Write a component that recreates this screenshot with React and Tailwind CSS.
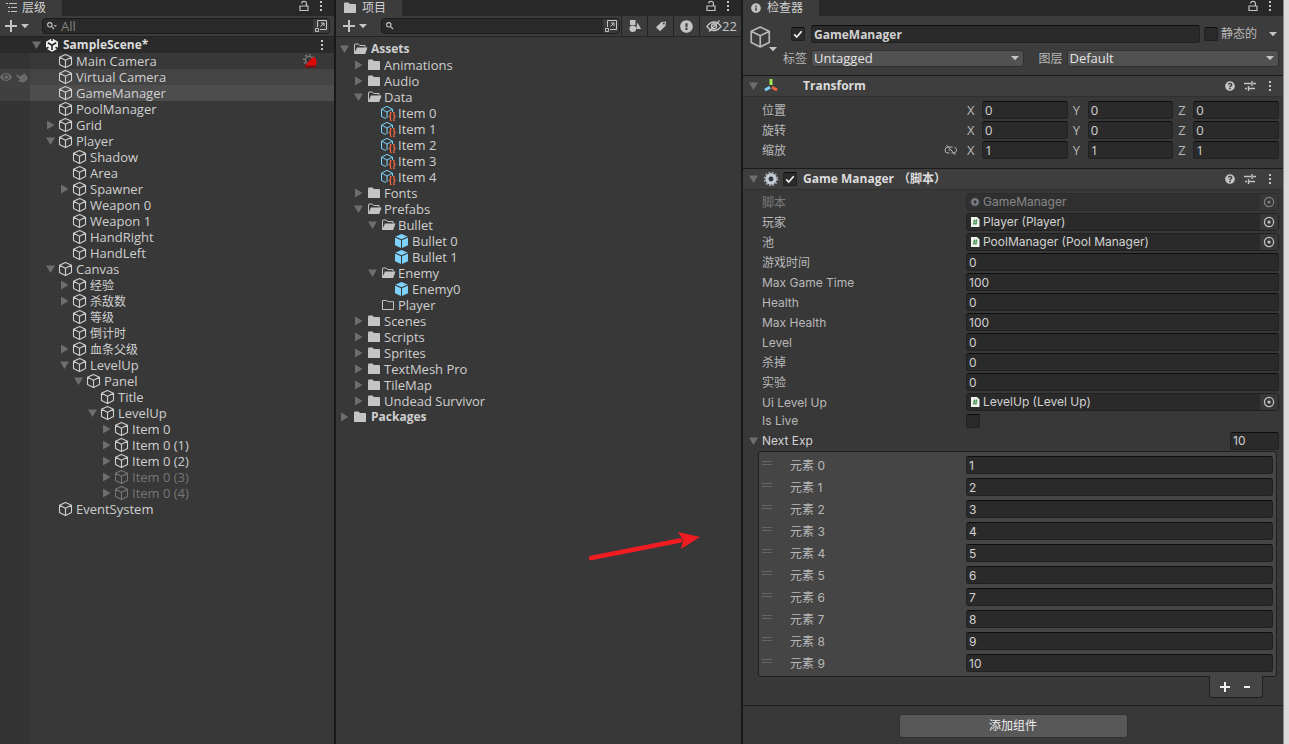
import { FaInfoCircle, FaQuestionCircle, FaExclamationCircle, FaEye, FaHandPointer } from "react-icons/fa";

const hierarchy = [
  { name: "Main Camera", depth: 1, icon: "cube", brain: true },
  { name: "Virtual Camera", depth: 1, icon: "cube", state: "hover" },
  { name: "GameManager", depth: 1, icon: "cube", state: "selected" },
  { name: "PoolManager", depth: 1, icon: "cube" },
  { name: "Grid", depth: 1, icon: "cube", arrow: "closed" },
  { name: "Player", depth: 1, icon: "cube", arrow: "open" },
  { name: "Shadow", depth: 2, icon: "cube" },
  { name: "Area", depth: 2, icon: "cube" },
  { name: "Spawner", depth: 2, icon: "cube", arrow: "closed" },
  { name: "Weapon 0", depth: 2, icon: "cube" },
  { name: "Weapon 1", depth: 2, icon: "cube" },
  { name: "HandRight", depth: 2, icon: "cube" },
  { name: "HandLeft", depth: 2, icon: "cube" },
  { name: "Canvas", depth: 1, icon: "cube", arrow: "open" },
  { name: "经验", depth: 2, icon: "cube", arrow: "closed", small: true },
  { name: "杀敌数", depth: 2, icon: "cube", arrow: "closed", small: true },
  { name: "等级", depth: 2, icon: "cube", small: true },
  { name: "倒计时", depth: 2, icon: "cube", small: true },
  { name: "血条父级", depth: 2, icon: "cube", arrow: "closed", small: true },
  { name: "LevelUp", depth: 2, icon: "cube", arrow: "open" },
  { name: "Panel", depth: 3, icon: "cube", arrow: "open" },
  { name: "Title", depth: 4, icon: "cube" },
  { name: "LevelUp", depth: 4, icon: "cube", arrow: "open" },
  { name: "Item 0", depth: 5, icon: "cube", arrow: "closed" },
  { name: "Item 0 (1)", depth: 5, icon: "cube", arrow: "closed" },
  { name: "Item 0 (2)", depth: 5, icon: "cube", arrow: "closed" },
  { name: "Item 0 (3)", depth: 5, icon: "cube", arrow: "closed", inactive: true },
  { name: "Item 0 (4)", depth: 5, icon: "cube", arrow: "closed", inactive: true },
  { name: "EventSystem", depth: 1, icon: "cube" },
];

const project = [
  { name: "Assets", depth: 0, icon: "open", arrow: "open", bold: true },
  { name: "Animations", depth: 1, icon: "folder", arrow: "closed" },
  { name: "Audio", depth: 1, icon: "folder", arrow: "closed" },
  { name: "Data", depth: 1, icon: "open", arrow: "open" },
  { name: "Item 0", depth: 2, icon: "asset" },
  { name: "Item 1", depth: 2, icon: "asset" },
  { name: "Item 2", depth: 2, icon: "asset" },
  { name: "Item 3", depth: 2, icon: "asset" },
  { name: "Item 4", depth: 2, icon: "asset" },
  { name: "Fonts", depth: 1, icon: "folder", arrow: "closed" },
  { name: "Prefabs", depth: 1, icon: "open", arrow: "open" },
  { name: "Bullet", depth: 2, icon: "open", arrow: "open" },
  { name: "Bullet 0", depth: 3, icon: "prefab" },
  { name: "Bullet 1", depth: 3, icon: "prefab" },
  { name: "Enemy", depth: 2, icon: "open", arrow: "open" },
  { name: "Enemy0", depth: 3, icon: "prefab" },
  { name: "Player", depth: 2, icon: "empty" },
  { name: "Scenes", depth: 1, icon: "folder", arrow: "closed" },
  { name: "Scripts", depth: 1, icon: "folder", arrow: "closed" },
  { name: "Sprites", depth: 1, icon: "folder", arrow: "closed" },
  { name: "TextMesh Pro", depth: 1, icon: "folder", arrow: "closed" },
  { name: "TileMap", depth: 1, icon: "folder", arrow: "closed" },
  { name: "Undead Survivor", depth: 1, icon: "folder", arrow: "closed" },
  { name: "Packages", depth: 0, icon: "folder", arrow: "closed", bold: true },
];

const fields = [
  { label: "脚本", ref: "GameManager", disabled: true },
  { label: "玩家", ref: "Player (Player)" },
  { label: "池", ref: "PoolManager (Pool Manager)" },
  { label: "游戏时间", value: "0" },
  { label: "Max Game Time", value: "100" },
  { label: "Health", value: "0" },
  { label: "Max Health", value: "100" },
  { label: "Level", value: "0" },
  { label: "杀掉", value: "0" },
  { label: "实验", value: "0" },
  { label: "Ui Level Up", ref: "LevelUp (Level Up)" },
];

const nextExp = ["1", "2", "3", "4", "5", "6", "7", "8", "9", "10"];

const inputClass =
  "h-[18px] min-w-0 rounded-[3px] border border-[#212121] border-t-[#0d0d0d] bg-[#2a2a2a] px-[2px] text-[#d2d2d2] outline-none";

const boxClass =
  "size-[14px] shrink-0 appearance-none rounded-[2px] border border-[#212121] border-t-[#0d0d0d] bg-[#2a2a2a]";

/* ---------- icons ---------- */

function Cube({ className = "size-4" }) {
  return (
    <svg viewBox="0 0 16 16" className={className} fill="none" stroke="currentColor" strokeWidth="1.1" strokeLinejoin="round">
      <path d="M7.5 1.4 13.5 4.2v7.4L7.5 14.6 1.5 11.6V4.2ZM1.5 4.2l6 3 6-3M7.5 7.2v7.4" />
    </svg>
  );
}

function Prefab() {
  return (
    <svg viewBox="0 0 16 16" className="size-4">
      <path d="M7.5 1 13.5 3.6 7.5 6.3 1.5 3.6Z" fill="#7ed2fb" />
      <path d="M1 4.6 7 7.3V15L1 12.2Z" fill="#7ed2fb" />
      <path d="M14 4.6 8 7.3V15l6-2.8Z" fill="#7ed2fb" />
    </svg>
  );
}

function DataAsset() {
  return (
    <svg viewBox="0 0 16 16" className="size-4" fill="none">
      <path d="M6 13.6 1.5 11.5V4.2L7 1.3l5.5 2.9V7M1.5 4.2 7 7l5.5-2.8M7 7v6" stroke="#7ed2fb" />
      <path d="M11.5 7.5h-1v3l-1.2 1 1.2 1v3h1M13 7.5h1v3l1.2 1-1.2 1v3h-1" stroke="#f0663f" strokeWidth="1.2" />
    </svg>
  );
}

function Folder() {
  return (
    <svg viewBox="0 0 16 16" className="size-4">
      <path d="M2 3.5Q2 2.5 3 2.5h3.5L8 4h5q1 0 1 1v7.5q0 .5-.5.5h-11q-.5 0-.5-.5Z" fill="#c4c4c4" />
    </svg>
  );
}

function FolderOpen() {
  return (
    <svg viewBox="0 0 16 16" className="size-4">
      <path d="M2.5 12.5V3.5q0-.5.5-.5h3.2l1.4 1.5H13V6.5" fill="none" stroke="#c4c4c4" />
      <path d="M5 6.5h10.5L13.2 13H2Z" fill="#c4c4c4" />
    </svg>
  );
}

function FolderEmpty() {
  return (
    <svg viewBox="0 0 16 16" className="size-4">
      <path d="M2.5 12.5v-9h4L8 4.7h5.5v7.8Z" fill="none" stroke="#c4c4c4" />
    </svg>
  );
}

function Foldout({ state }) {
  return (
    <svg viewBox="0 0 12 12" className="size-3 shrink-0" fill="#6e6e6e">
      {state === "open" && <path d="M2 2.5h9L6.5 10Z" />}
      {state === "closed" && <path d="M3 1.5v9L10.5 6Z" />}
    </svg>
  );
}

function Caret() {
  return (
    <svg viewBox="0 0 8 8" className="size-2 shrink-0" fill="#c4c4c4">
      <path d="M0 2h8L4 6.2Z" />
    </svg>
  );
}

function Dots() {
  return (
    <svg viewBox="0 0 4 12" className="h-3 w-1" fill="#c4c4c4">
      <path d="M1 1h2v2H1zM1 5h2v2H1zM1 9h2v2H1z" />
    </svg>
  );
}

function Lock() {
  return (
    <svg viewBox="0 0 10 12" className="h-3 w-[10px]" fill="none" stroke="#c4c4c4" strokeWidth="1.2">
      <path d="M1 6h8v4.5H1ZM2.8 3.6V3q0-1.6 2.2-1.6T7.4 3v3" />
    </svg>
  );
}

function Plus() {
  return (
    <svg viewBox="0 0 12 12" className="size-3" stroke="#c4c4c4" strokeWidth="2">
      <path d="M6 0v12M0 6h12" />
    </svg>
  );
}

function Magnifier({ caret }) {
  return (
    <svg viewBox="0 0 10 8" className="h-2 w-[10px] shrink-0" fill="none" stroke="#c4c4c4" strokeWidth="1.1">
      <circle cx="2.8" cy="2.8" r="2.2" />
      <path d="M4.4 4.4 7 7" />
      {caret && <path d="M6.4 3.2h3.6L8.2 5Z" fill="#c4c4c4" stroke="none" />}
    </svg>
  );
}

function OpenSearch() {
  return (
    <svg viewBox="0 0 12 12" className="size-3" fill="none" stroke="#c4c4c4">
      <path d="M2.5 7V.5h9v9H5M.5 8.5h3v3h-3zM5.5 6.5l3.5-3.5M6 3h3v3" />
    </svg>
  );
}

function UnityLogo() {
  return (
    <svg viewBox="0 0 16 16" className="size-4">
      <path d="M8 1.3 14 4.7v6.7L8 14.8 2 11.4V4.7Z" fill="#f0f0f0" />
      <path d="M8 8.2V13M8 8.2 3.8 5.8M8 8.2l4.2-2.4" stroke="#282828" strokeWidth="1.6" />
      <path d="M8 .5V4M1.5 12l3-1.7M14.5 12l-3-1.7" stroke="#282828" strokeWidth="1.6" />
    </svg>
  );
}

function Gear({ className = "size-4" }) {
  return (
    <svg viewBox="0 0 16 16" className={className} fill="none">
      <circle cx="8" cy="8" r="6.3" stroke="#9aa2ac" strokeWidth="2" strokeDasharray="1.7 1.6" />
      <circle cx="8" cy="8" r="4" stroke="#c3cad3" strokeWidth="3.4" />
      <circle cx="8" cy="8" r="2.4" fill="#33363b" />
    </svg>
  );
}

function ScriptFile() {
  return (
    <svg viewBox="0 0 10 12" className="h-3 w-[10px]">
      <path d="M1 1h6l2.5 2.5V11H1Z" fill="#eef3ee" />
      <path d="M4.6 3.4 3.8 8.8M6.6 3.4 5.8 8.8M3.2 5h4.2M2.9 7.2h4.2" stroke="#3b8746" strokeWidth=".9" />
    </svg>
  );
}

function TransformIcon() {
  return (
    <svg viewBox="0 0 16 16" className="size-4" strokeWidth="3">
      <path d="M8 1v6" stroke="#a3e84f" />
      <path d="M7 9.2 2 12" stroke="#7ed2fb" />
      <path d="m9 9.2 5 2.8" stroke="#f0663f" />
    </svg>
  );
}

function Sliders() {
  return (
    <svg viewBox="0 0 12 12" className="size-3" fill="none" stroke="#c4c4c4" strokeWidth="1.4">
      <path d="M0 3.5h7M9 3.5h3M8 1v5M1 8.5h2M5 8.5h6M4.5 6v5" />
    </svg>
  );
}

function BrainIcon() {
  return (
    <svg viewBox="0 0 16 16" className="size-4">
      <circle cx="7" cy="7" r="3.6" fill="none" stroke="#7b7b7b" strokeWidth="1.3" />
      <circle cx="7" cy="7" r="5.2" fill="none" stroke="#7b7b7b" strokeWidth="1.6" strokeDasharray="1.6 2.4" />
      <path d="M3 12.5 11 4l1.3 1.5L14 4.3v4l1.7 1-1.7 1v2.2Z" fill="#e00808" />
      <path d="M3 12.5h10.5v2H3Z" fill="#8e0606" />
    </svg>
  );
}

function Unlinked() {
  return (
    <svg viewBox="0 0 14 12" className="h-3 w-[14px]" fill="none" stroke="#b4b4b4">
      <path d="M8.5 3H4a3 3 0 0 0 0 6h1.5M10.5 3.2a3 3 0 0 1-.5 5.8H7.5M4.5 6h2M2.5 1l9 10" />
    </svg>
  );
}

function HiddenEye() {
  return (
    <svg viewBox="0 0 16 14" className="h-[14px] w-4 shrink-0" fill="none" stroke="#c4c4c4" strokeWidth="1.4">
      <path d="M1 7.5Q4 3 8 3t7 4.5Q12 11.5 8 11.5T1 7.5Z" />
      <path d="M5.5 7.2a2.5 2.5 0 0 1 5 0 2.5 2.5 0 0 1-5 0M3 12.5 13.5 1.5" />
    </svg>
  );
}

function FilterType() {
  return (
    <svg viewBox="0 0 14 14" className="size-[14px]" fill="#c4c4c4">
      <path d="M2 1h5.5v5H2zM9.5 3.5 13 10H8Z" />
      <circle cx="4.8" cy="9.8" r="3.3" />
    </svg>
  );
}

function Tag() {
  return (
    <svg viewBox="0 0 12 12" className="size-3">
      <path d="M1 7.2 6.5 2 11 1.5 10.5 6 5 11.2Z" fill="#c4c4c4" />
      <circle cx="8.8" cy="3.6" r="1" fill="#3c3c3c" />
    </svg>
  );
}

const icons = {
  cube: <Cube />,
  prefab: <Prefab />,
  asset: <DataAsset />,
  folder: <Folder />,
  open: <FolderOpen />,
  empty: <FolderEmpty />,
};

/* ---------- shared parts ---------- */

function TabBar({ title, icon }) {
  return (
    <div className="flex h-4 justify-between bg-[#282828]">
      <div className="flex h-4 items-center gap-1 bg-[#3c3c3c] pr-4 pl-[6px] text-xs leading-4 text-[#d2d2d2]">
        {icon}
        <h2>{title}</h2>
      </div>
      <div className="flex items-center gap-[10px] pr-[11px] pb-1">
        <button aria-label="Lock"><Lock /></button>
        <button aria-label="Menu"><Dots /></button>
      </div>
    </div>
  );
}

function SearchBox({ placeholder, caret }) {
  return (
    <div className="flex h-4 min-w-0 flex-1 items-center rounded-[4px] border border-[#1c1c1c] bg-[#2a2a2a]">
      <label className="flex min-w-0 flex-1 items-center gap-1 pl-1">
        <Magnifier caret={caret} />
        <input
          type="text"
          aria-label="Search"
          placeholder={placeholder}
          className="min-w-0 flex-1 bg-transparent leading-[14px] outline-none placeholder:text-[#7f7f7f]"
        />
      </label>
      <button aria-label="Open search" className="flex h-[14px] w-4 items-center justify-center rounded-r-[3px] bg-[#3a3a3a]">
        <OpenSearch />
      </button>
    </div>
  );
}

function TreeItem({ item, children }) {
  return (
    <div
      role="treeitem"
      className={`flex h-4 min-w-0 flex-1 items-center gap-[2px] leading-4 whitespace-nowrap ${item.inactive ? "text-[#767676]" : "text-[#cfcfcf]"}`}
      style={{ paddingLeft: item.depth * 14 }}
    >
      <Foldout state={item.arrow} />
      {icons[item.icon]}
      <span className={`flex-1 ${item.bold ? "pl-px text-xs font-bold" : ""} ${item.small ? "pt-[2px] text-xs" : ""}`}>{item.name}</span>
      {children}
    </div>
  );
}

/* ---------- panels ---------- */

function Hierarchy() {
  return (
    <section className="flex min-w-0 flex-col border-r-2 border-[#191919]">
      <TabBar
        title="层级"
        icon={
          <svg viewBox="0 0 12 12" className="size-3" stroke="#c4c4c4">
            <path d="M0 1.5h2M3 1.5h8M2 5.5h2M5 5.5h6M2 9.5h2M5 9.5h6" />
          </svg>
        }
      />
      <div className="flex h-[21px] items-center gap-[13px] border-b border-[#232323] bg-[#3c3c3c] pr-1 pl-[5px]">
        <button aria-label="Create" className="flex items-center gap-1"><Plus /><Caret /></button>
        <SearchBox placeholder="All" caret />
      </div>
      <div role="tree" className="flex flex-1 flex-col bg-[linear-gradient(to_right,#333333_30px,#383838_30px)]">
        <div className="flex h-4 items-center gap-[2px] bg-[#2a2a2a] pr-[10px] pl-[30px] text-xs leading-4 font-bold text-[#dcdcdc]">
          <Foldout state="open" />
          <UnityLogo />
          <span className="flex-1 pl-px">SampleScene*</span>
          <button aria-label="Scene menu"><Dots /></button>
        </div>
        {hierarchy.map((item, i) => (
          <div
            key={i}
            className={`flex ${item.state === "hover" ? "bg-[#444444]" : item.state === "selected" ? "bg-[#4d4d4d]" : ""}`}
          >
            <div className={`flex h-4 w-[30px] items-center gap-1 ${item.state ? "bg-[#404040]" : ""}`}>
              {item.state === "hover" && (
                <>
                  <FaEye className="size-3 text-[#6c6c6c]" />
                  <FaHandPointer className="size-[11px] -rotate-45 text-[#6c6c6c]" />
                </>
              )}
            </div>
            <TreeItem item={item}>
              {item.brain && <span className="pr-4"><BrainIcon /></span>}
            </TreeItem>
          </div>
        ))}
      </div>
    </section>
  );
}

function Project() {
  return (
    <section className="relative flex min-w-0 flex-col border-r-2 border-[#191919] bg-[#383838]">
      <TabBar title="项目" icon={<Folder />} />
      <div className="flex h-[21px] items-center border-b border-[#232323] bg-[#3c3c3c] pl-[7px]">
        <button aria-label="Create" className="mr-[14px] flex items-center gap-1"><Plus /><Caret /></button>
        <SearchBox />
        <div className="ml-px flex h-5 divide-x divide-[#232323] border-l border-[#232323]">
          <button aria-label="Search by type" className="flex w-[26px] items-center justify-center"><FilterType /></button>
          <button aria-label="Search by label" className="flex w-[26px] items-center justify-center"><Tag /></button>
          <button aria-label="Search by log type" className="flex w-[26px] items-center justify-center">
            <FaExclamationCircle className="size-[13px] text-[#c4c4c4]" />
          </button>
          <button className="flex w-[41px] items-center pl-[6px] text-[#c4c4c4]"><HiddenEye />22</button>
        </div>
      </div>
      <div role="tree" className="py-1 pl-[2px]">
        {project.map((item, i) => (
          <TreeItem key={i} item={item} />
        ))}
      </div>
      {/* pointer drawn over the empty area */}
      <svg viewBox="0 0 114 34" className="absolute top-[528px] left-[252px] h-[34px] w-[114px]">
        <path d="M3 30 92 12.5" stroke="#f01c22" strokeWidth="4.6" strokeLinecap="round" />
        <path d="M90 4 112 9 93 21 95 12Z" fill="#f01c22" />
      </svg>
    </section>
  );
}

function Dropdown({ id, label, value }) {
  return (
    <div className="flex min-w-0 flex-1 items-center">
      <label htmlFor={id} className="w-7 shrink-0 text-xs text-[#b8b8b8]">{label}</label>
      <div className="relative min-w-0 flex-1">
        <select
          id={id}
          className="block h-[17px] w-full appearance-none rounded-[3px] border border-[#303030] bg-[#515151] px-[2px] leading-[15px] text-[#e4e4e4] outline-none"
        >
          <option>{value}</option>
        </select>
        <span className="pointer-events-none absolute top-1 right-[5px]"><Caret /></span>
      </div>
    </div>
  );
}

function ComponentHeader({ icon, title, suffix, toggle }) {
  return (
    <header className="flex h-[22px] items-center border-t border-b border-t-[#1a1a1a] border-b-[#303030] bg-[#3e3e3e] pr-[3px] pl-1">
      <Foldout state="open" />
      <div className="ml-1 flex w-10 items-center gap-1">
        {icon}
        {toggle && <Toggle label={title} checked />}
      </div>
      <h3 className="flex-1 text-xs font-bold text-[#dcdcdc]">
        {title}
        {suffix && <span className="ml-1">{suffix}</span>}
      </h3>
      <button aria-label="Help" className="flex w-5 justify-center">
        <FaQuestionCircle className="size-[10px] text-[#c4c4c4]" />
      </button>
      <button aria-label="Presets" className="flex w-5 justify-center"><Sliders /></button>
      <button aria-label="Component menu" className="flex w-5 justify-center"><Dots /></button>
    </header>
  );
}

function Toggle({ id, label, checked }) {
  return (
    <span className="relative flex shrink-0">
      <input id={id} type="checkbox" aria-label={label} defaultChecked={checked} className={`${boxClass} peer`} />
      <svg viewBox="0 0 14 14" className="pointer-events-none absolute inset-0 hidden size-[14px] peer-checked:block" fill="none" stroke="#f0f0f0" strokeWidth="1.7">
        <path d="m3.2 7.4 2.5 2.6 5-5.8" />
      </svg>
    </span>
  );
}

function VectorRow({ label, value, linked }) {
  return (
    <div className="flex h-5 items-center">
      <div className="flex w-[204px] shrink-0 items-center justify-between pr-2 text-xs text-[#b8b8b8]">
        <span className="pt-[2px]">{label}</span>
        {linked && <Unlinked />}
      </div>
      <div className="flex min-w-0 flex-1 gap-1">
        {["X", "Y", "Z"].map((axis) => (
          <label key={axis} className="flex min-w-0 flex-1 items-center text-[#b8b8b8]">
            <span className="w-4 shrink-0 pl-px">{axis}</span>
            <input defaultValue={value} className={`${inputClass} w-full flex-1`} />
          </label>
        ))}
      </div>
    </div>
  );
}

function FieldRow({ field, id }) {
  return (
    <div className={`flex h-5 items-center ${field.disabled ? "opacity-50" : ""}`}>
      <label htmlFor={id} className="w-[204px] shrink-0 pt-[2px] text-[#b8b8b8]">{field.label}</label>
      {field.ref ? (
        <div className="flex h-[18px] min-w-0 flex-1 items-center rounded-[3px] border border-[#212121] bg-[#2a2a2a] pl-[3px]">
          {field.disabled ? <Gear className="size-[10px]" /> : <ScriptFile />}
          <input id={id} readOnly defaultValue={field.ref} className="ml-[3px] min-w-0 flex-1 bg-transparent text-[#d2d2d2] outline-none" />
          <button aria-label="Select object" className="flex h-4 w-[18px] items-center justify-center bg-[#373737]">
            <svg viewBox="0 0 12 12" className="size-3">
              <circle cx="6" cy="6" r="4.6" fill="none" stroke="#c4c4c4" strokeWidth="1.2" />
              <circle cx="6" cy="6" r="1.6" fill="#c4c4c4" />
            </svg>
          </button>
        </div>
      ) : (
        <input id={id} defaultValue={field.value} className={`${inputClass} flex-1`} />
      )}
    </div>
  );
}

function Inspector() {
  return (
    <section className="min-w-0 bg-[#383838]">
      <TabBar title="检查器" icon={<FaInfoCircle className="mx-[2px] size-[10px] text-[#c4c4c4]" />} />

      <div className="flex h-[59px] bg-[#3c3c3c] pt-[9px] pr-1 pl-[6px]">
        <button aria-label="Object icon" className="flex h-7 w-[34px] items-start text-[#b8b8b8]">
          <Cube className="size-6" />
          <span className="-ml-1 self-end"><Caret /></span>
        </button>
        <div className="flex min-w-0 flex-1 flex-col gap-[7px]">
          <div className="flex h-[18px] items-center pl-2">
            <Toggle label="Active" checked />
            <input
              aria-label="Name"
              defaultValue="GameManager"
              className={`${inputClass} mr-1 ml-[6px] flex-1 text-xs font-bold`}
            />
            <Toggle id="static" />
            <label htmlFor="static" className="mr-3 ml-[3px] text-xs text-[#b8b8b8]">静态的</label>
            <button aria-label="Static options" className="mr-[2px]"><Caret /></button>
          </div>
          <div className="flex gap-[15px]">
            <Dropdown id="tag" label="标签" value="Untagged" />
            <Dropdown id="layer" label="图层" value="Default" />
          </div>
        </div>
      </div>

      <ComponentHeader title="Transform" icon={<TransformIcon />} />
      <div className="pt-[3px] pr-1 pb-2 pl-[19px]">
        <VectorRow label="位置" value="0" />
        <VectorRow label="旋转" value="0" />
        <VectorRow label="缩放" value="1" linked />
      </div>

      <ComponentHeader title="Game Manager" suffix="（脚本）" icon={<Gear />} toggle />
      <div className="pt-[2px] pr-1 pl-[19px] font-['Inter','Noto_Sans_CJK_SC',sans-serif] text-xs">
        {fields.map((field, i) => (
          <FieldRow key={field.label} field={field} id={`field-${i}`} />
        ))}
        <div className="flex h-[18px] items-center">
          <label htmlFor="is-live" className="w-[204px] text-[#b8b8b8]">Is Live</label>
          <Toggle id="is-live" />
        </div>
      </div>

      <div className="pr-1 pl-1 font-['Inter','Noto_Sans_CJK_SC',sans-serif] text-xs">
        <div className="flex h-[21px] items-center">
          <Foldout state="open" />
          <label htmlFor="next-exp" className="flex-1 pl-[3px] text-[#d2d2d2]">Next Exp</label>
          <input id="next-exp" defaultValue="10" className={`${inputClass} w-[49px]`} />
        </div>
        <div className="mr-[2px] ml-[11px] rounded-[3px] border border-[#1f1f1f] bg-[#454545] py-[2px] pr-[3px] pl-[3px]">
          {nextExp.map((value, i) => (
            <div key={i} className="flex h-[22px] items-center">
              <span className="mb-1 h-1 w-[10px] border-y border-[#666666]" />
              <label htmlFor={`exp-${i}`} className="w-[194px] pt-[2px] pl-[18px] text-[#b8b8b8]">元素 {i}</label>
              <input id={`exp-${i}`} defaultValue={value} className={`${inputClass} flex-1`} />
            </div>
          ))}
        </div>
        <div className="flex justify-end pr-4">
          <div className="-mt-px flex h-[22px] w-[54px] items-center justify-around rounded-b-[3px] border border-t-0 border-[#1f1f1f] bg-[#454545] px-1 text-white">
            <button aria-label="Add element">
              <svg viewBox="0 0 10 10" className="size-[10px]" stroke="#f0f0f0" strokeWidth="2"><path d="M5 0v10M0 5h10" /></svg>
            </button>
            <button aria-label="Remove element">
              <svg viewBox="0 0 10 10" className="size-[10px]" stroke="#f0f0f0" strokeWidth="2"><path d="M2 5h6" /></svg>
            </button>
          </div>
        </div>
      </div>

      <div className="mt-[7px] flex justify-center border-t border-[#1f1f1f] pt-2">
        <button className="h-6 w-[229px] rounded-[3px] border border-[#303030] bg-[#585858] text-xs text-[#eeeeee]">
          添加组件
        </button>
      </div>
    </section>
  );
}

export default function App() {
  return (
    <main className="grid min-h-screen grid-cols-[336fr_407fr_540fr_6px] bg-[#383838] font-['Open_Sans','Noto_Sans_CJK_SC',sans-serif] text-[13px] leading-4 text-[#cfcfcf]">
      <Hierarchy />
      <Project />
      <Inspector />
      <div className="border-l border-[#8a8a8a] bg-[#dadada]" />
    </main>
  );
}
